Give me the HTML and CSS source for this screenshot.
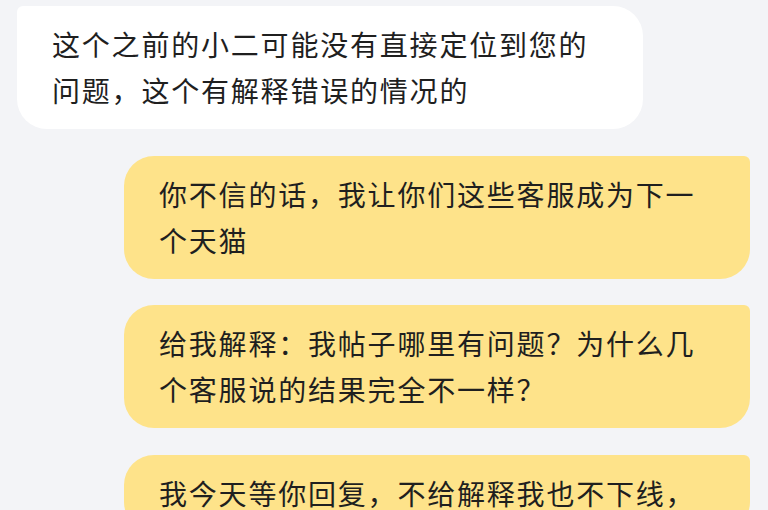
FILE: index.html
```html
<!DOCTYPE html>
<html lang="zh-CN">
<head>
<meta charset="utf-8">
<link rel="stylesheet" href="styles.css">
</head>
<body>
<div class="chat">
  <div class="msg msg-in">这个之前的小二可能没有直接定位到您的问题，这个有解释错误的情况的</div>
  <div class="msg msg-out">你不信的话，我让你们这些客服成为下一个天猫</div>
  <div class="msg msg-out">给我解释：我帖子哪里有问题？为什么几个客服说的结果完全不一样？</div>
  <div class="msg msg-out">我今天等你回复，不给解释我也不下线，</div>
</div>
</body>
</html>
```
FILE: styles.css
```css
html, body {
  margin: 0;
  padding: 0;
  background: #f3f4f7;
  height: 100%;
  overflow: hidden;
}
.chat {
  display: flex;
  flex-direction: column;
  gap: 26.5px;
  padding: 6px 18px 0 17px;
}
.msg {
  box-sizing: border-box;
  width: 626px;
  padding: 15px 35px 16px 35px;
  font-family: "Noto Sans CJK SC", "Noto Sans", sans-serif;
  font-size: 28px;
  line-height: 46px;
  letter-spacing: 1.8px;
  color: #1f1f1f;
}
.msg-in {
  align-self: flex-start;
  background: #ffffff;
  border-radius: 6px 30px 30px 30px;
}
.msg-out {
  align-self: flex-end;
  background: #fee38a;
  border-radius: 30px 6px 30px 30px;
}
```
